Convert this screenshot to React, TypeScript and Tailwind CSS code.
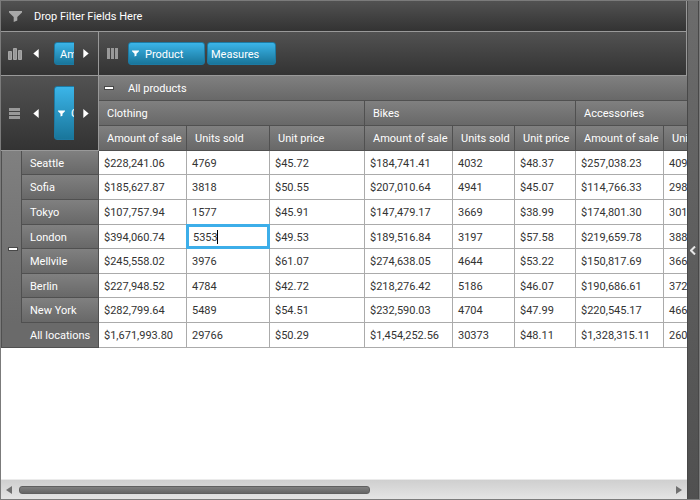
import React from "react";

const groups = ["Clothing", "Bikes", "Accessories"];
const measures = ["Amount of sale", "Units sold", "Unit price"];

const rows = [
  { name: "Seattle", cells: ["$228,241.06", "4769", "$45.72", "$184,741.41", "4032", "$48.37", "$257,038.23", "4093"] },
  { name: "Sofia", cells: ["$185,627.87", "3818", "$50.55", "$207,010.64", "4941", "$45.07", "$114,766.33", "2984"] },
  { name: "Tokyo", cells: ["$107,757.94", "1577", "$45.91", "$147,479.17", "3669", "$38.99", "$174,801.30", "3012"] },
  { name: "London", cells: ["$394,060.74", "5353", "$49.53", "$189,516.84", "3197", "$57.58", "$219,659.78", "3882"] },
  { name: "Mellvile", cells: ["$245,558.02", "3976", "$61.07", "$274,638.05", "4644", "$53.22", "$150,817.69", "3664"] },
  { name: "Berlin", cells: ["$227,948.52", "4784", "$42.72", "$218,276.42", "5186", "$46.07", "$190,686.61", "3721"] },
  { name: "New York", cells: ["$282,799.64", "5489", "$54.51", "$232,590.03", "4704", "$47.99", "$220,545.17", "4660"] },
  { name: "All locations", cells: ["$1,671,993.80", "29766", "$50.29", "$1,454,252.56", "30373", "$48.11", "$1,328,315.11", "26016"] },
];

const columns = groups.flatMap((group) => measures.map((measure) => ({ group, measure }))).slice(0, 8);

const columnWidths = [
  "w-[21px]", "w-[77px]",
  "w-[88px]", "w-[83px]", "w-[95px]",
  "w-[88px]", "w-[62px]", "w-[61px]",
  "w-[88px]", "w-[62px]",
];

const panel = "bg-linear-to-b from-[#525252] to-[#333333]";
const head =
  "bg-linear-to-b from-[#808080] to-[#686868] border-r border-b border-[#505050] font-normal text-left text-white whitespace-nowrap";

function Funnel({ className, fill }: { className: string; fill: string }) {
  return (
    <svg viewBox="0 0 13 11" className={className} fill={fill} aria-hidden="true">
      <path d="M0 0h13v1.5L8.3 6v3.5L4.7 11V6L0 1.5z" />
    </svg>
  );
}

function Arrow({ left, label }: { left?: boolean; label: string }) {
  return (
    <button type="button" aria-label={label} className="flex h-5 w-3 shrink-0 items-center justify-center">
      <svg viewBox="0 0 6 10" className="h-[9px] w-[6px]" fill="#fff">
        <path d={left ? "M6 0v10L0 5z" : "M0 0v10l6-5z"} />
      </svg>
    </button>
  );
}

function Collapse({ label }: { label: string }) {
  return (
    <button type="button" aria-label={label} className="block h-1 w-[10px] border border-[#484848] bg-white" />
  );
}

const pill =
  "flex items-center rounded-[3px] border border-[#1d7aa3] bg-linear-to-b from-[#3bb5e9] to-[#19769b] text-white whitespace-nowrap";

export default function App() {
  return (
    <div className="flex h-screen overflow-hidden border border-[#7b7b7b] bg-white font-[Roboto,sans-serif] text-[11px] leading-4 text-[#333333]">
      <main className="flex min-w-0 flex-1 flex-col">
        <div className={`flex h-[31px] shrink-0 items-center gap-3 border-r border-b border-[#999999] pl-2 text-white ${panel}`}>
          <Funnel className="h-[11px] w-[13px]" fill="#a8a8a8" />
          <span className="pt-0.5">Drop Filter Fields Here</span>
        </div>

        <div className={`flex h-11 shrink-0 border-r border-b border-[#999999] ${panel}`}>
          <div className="flex w-[98px] shrink-0 items-center border-r border-[#999999] pl-[7px]">
            <svg viewBox="0 0 14 12" className="mr-2 h-3 w-[14px] shrink-0" fill="#999999" stroke="#a6a6a6" aria-hidden="true">
              <path d="M.5 3.5h3v8h-3zM5.5 .5h3v11h-3zM10.5 2.5h3v9h-3z" />
            </svg>
            <Arrow left label="Scroll data fields left" />
            <div className="mr-[6px] ml-3 w-5 shrink-0 overflow-hidden">
              <button type="button" className={`${pill} h-[23px] w-24 pl-[5px]`}>
                <span className="pt-0.5">Amount of sale</span>
              </button>
            </div>
            <Arrow label="Scroll data fields right" />
          </div>
          <div className="flex items-center gap-[2px] pl-2">
            <svg viewBox="0 0 11 11" className="mr-2 h-[11px] w-[11px]" fill="#999999" aria-hidden="true">
              <path d="M0 0h3v11H0zM4 0h3v11H4zM8 0h3v11H8z" />
            </svg>
            <button type="button" className={`${pill} h-[23px] w-[77px] gap-[6px] pl-[3px]`}>
              <Funnel className="h-[7px] w-[7px]" fill="#fff" />
              <span className="pt-0.5">Product</span>
            </button>
            <button type="button" className={`${pill} h-[23px] w-[69px] pl-[3px]`}>
              <span className="pt-0.5">Measures</span>
            </button>
          </div>
        </div>

        <div className="min-h-0 flex-1 overflow-hidden">
          <table className="w-[725px] table-fixed border-separate border-spacing-0">
            <colgroup>
              {columnWidths.map((w, i) => (
                <col key={i} className={w} />
              ))}
            </colgroup>
            <thead>
              <tr className="h-[25px]">
                <td rowSpan={3} colSpan={2} className={`border-r border-b border-[#999999] p-0 ${panel}`}>
                  <div className="flex items-center pl-2">
                    <svg viewBox="0 0 11 11" className="mr-[10px] h-[11px] w-[11px] shrink-0" fill="#999999" aria-hidden="true">
                      <path d="M0 0h11v3H0zM0 4h11v3H0zM0 8h11v3H0z" />
                    </svg>
                    <Arrow left label="Scroll row fields left" />
                    <div className="mr-[6px] ml-3 w-5 shrink-0 overflow-hidden">
                      <button type="button" className={`${pill} h-[54px] w-16 gap-[6px] pl-[3px]`}>
                        <Funnel className="h-[7px] w-[7px] shrink-0" fill="#fff" />
                        <span className="pt-0.5">City</span>
                      </button>
                    </div>
                    <Arrow label="Scroll row fields right" />
                  </div>
                </td>
                <th colSpan={8} scope="colgroup" className={`${head} p-0 pl-[5px]`}>
                  <div className="flex items-center gap-[14px]">
                    <Collapse label="Collapse all products" />
                    <span className="pt-0.5">All products</span>
                  </div>
                </th>
              </tr>
              <tr className="h-[25px]">
                {groups.map((g, i) => (
                  <th key={g} colSpan={i === 2 ? 2 : 3} scope="colgroup" className={`${head} p-0 pt-0.5 pl-2`}>{g}</th>
                ))}
              </tr>
              <tr className="h-[25px]">
                {columns.map(({ group, measure }) => (
                  <th key={group + measure} scope="col" className={`${head} p-0 pt-0.5 pl-2`}>{measure}</th>
                ))}
              </tr>
            </thead>
            <tbody>
              {rows.map((r, i) => {
                const total = i === rows.length - 1;
                return (
                  <tr key={r.name} className={i === 0 || i === 3 || i === 5 ? "h-6" : "h-[25px]"}>
                    {i === 0 && (
                      <th rowSpan={7} scope="rowgroup" className="border-x border-[#505050] bg-linear-to-b from-[#808080] to-[#6a6a6a] p-0 pl-[6px]">
                        <div className="pt-6">
                          <Collapse label="Collapse all locations" />
                        </div>
                      </th>
                    )}
                    {total ? (
                      <th colSpan={2} scope="row" className="border-x border-b border-[#505050] bg-[#6a6a6a] p-0 pt-0.5 pl-7 text-left font-normal text-white">
                        {r.name}
                      </th>
                    ) : (
                      <th scope="row" className={`${head} p-0 pt-0.5 pl-2`}>{r.name}</th>
                    )}
                    {r.cells.map((c, j) =>
                      i === 3 && j === 1 ? (
                        <td key={j} className="relative border-r border-b border-[#ababab] p-0">
                          <div className="absolute -inset-[1px] flex items-center border-[3px] border-[#3daee9] bg-white pl-1">
                            <input
                              aria-label="London clothing units sold"
                              defaultValue={c}
                              className="w-6 bg-transparent p-0 pt-0.5 caret-transparent outline-none"
                            />
                            <span className="h-[14px] w-px bg-black" />
                          </div>
                        </td>
                      ) : (
                        <td key={j} className="border-r border-b border-[#ababab] p-0 pt-0.5 pl-[5px] whitespace-nowrap">{c}</td>
                      ),
                    )}
                  </tr>
                );
              })}
            </tbody>
          </table>
        </div>

        <div className="flex h-5 shrink-0 items-center border-t border-[#ebebeb] bg-linear-to-b from-[#cfcfcf] to-[#e4e4e4] px-[5px]">
          <button type="button" aria-label="Scroll left">
            <svg viewBox="0 0 6 8" className="h-2 w-[6px]" fill="#707070"><path d="M6 0v8L0 4z" /></svg>
          </button>
          <div className="mx-[7px] flex-1">
            <div className="h-2 w-[54%] rounded-[3px] border border-[#606060] bg-linear-to-b from-[#808080] to-[#666666]" />
          </div>
          <button type="button" aria-label="Scroll right">
            <svg viewBox="0 0 6 8" className="h-2 w-[6px]" fill="#707070"><path d="M0 0v8l6-4z" /></svg>
          </button>
        </div>
      </main>

      <button
        type="button"
        aria-label="Expand field list"
        className="flex w-3 shrink-0 items-center justify-center border-x border-[#484848] bg-linear-to-b from-[#6c6c6c] to-[#505050]"
      >
        <svg viewBox="0 0 6 9" className="h-[9px] w-[6px]" fill="none" stroke="#e8e8e8" strokeWidth="2">
          <path d="M5 .5l-4 4 4 4" />
        </svg>
      </button>
    </div>
  );
}
